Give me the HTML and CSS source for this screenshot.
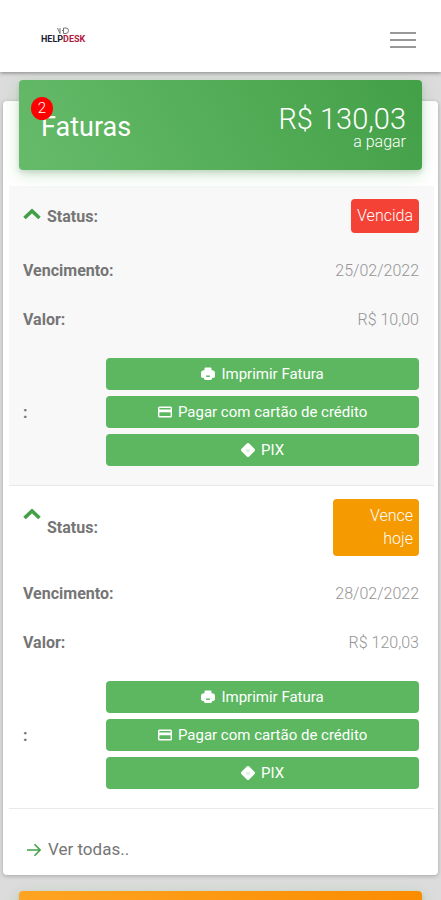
FILE: index.html
```html
<!DOCTYPE html>
<html lang="pt-BR">
<head>
<meta charset="utf-8">
<meta name="viewport" content="width=device-width, initial-scale=1">
<title>Faturas</title>
<link rel="stylesheet" href="styles.css">
</head>
<body>
<svg class="defs" aria-hidden="true">
  <symbol id="chevron" viewBox="0 0 18 12"><path d="M1.500 10 9 3l7.500 7" fill="none" stroke="currentColor" stroke-width="3.600"/></symbol>
  <symbol id="printer" viewBox="0 0 14 14"><path d="M3.500 1.500A1 1 0 0 1 4.500.5h5a1 1 0 0 1 1 1v1.700a3.300 3.300 0 0 1 3.500 3.300V9a2 2 0 0 1-2 2h-.8a2 2 0 0 1-2 2H4.800a2 2 0 0 1-2-2H2a2 2 0 0 1-2-2V6.500a3.300 3.300 0 0 1 3.500-3.300z" fill="currentColor"/><path d="M5 9.200h4" stroke="#5db761" stroke-width="1.400"/></symbol>
  <symbol id="card" viewBox="0 0 14 14"><path d="M1.500 1.500h11A1.500 1.500 0 0 1 14 3v8a1.500 1.500 0 0 1-1.500 1.500h-11A1.500 1.500 0 0 1 0 11V3a1.500 1.500 0 0 1 1.500-1.500zM1.400 3.100v1.300h11.200V3.100zM1.400 7.200V11h11.200V7.200z" fill="currentColor" fill-rule="evenodd"/></symbol>
  <symbol id="pix" viewBox="0 0 14 14"><path d="M5.800.6a1.700 1.700 0 0 1 2.400 0l5.200 5.200a1.700 1.700 0 0 1 0 2.400l-5.200 5.200a1.700 1.700 0 0 1-2.400 0L.6 8.200a1.700 1.700 0 0 1 0-2.400z" fill="currentColor"/><path d="M5 5.800l2 1.700 2-1.700M5 9l2-1.500L9 9" fill="none" stroke="#5db761" stroke-opacity=".4" stroke-width=".7"/></symbol>
</svg>
<header class="topbar">
  <a class="logo" href="#" aria-label="HELPDESK">
    <svg class="logo-mark" viewBox="0 0 12 8" aria-hidden="true"><path d="M.5 1 3 6.500V1M5 3.500h1.500M6.500 1H9q2.500 0 2.500 2.700T9 6.500H6.500z" fill="none" stroke="#666" stroke-width=".9"/></svg>
    <span class="logo-name">HELP<span class="logo-accent">DESK</span></span>
  </a>
  <button class="menu" type="button" aria-label="Menu"><span></span><span></span><span></span></button>
</header>
<main class="content">
  <section class="panel">
    <header class="panel-head">
      <h1 class="title">Faturas<span class="count">2</span></h1>
      <p class="total">R$ 130,03<small>a pagar</small></p>
    </header>
    <table class="invoices">
      <tbody class="invoice">
        <tr><th scope="row"><svg class="chevron"><use href="#chevron"/></svg><span>Status:</span></th><td><span class="badge late">Vencida</span></td></tr>
        <tr><th scope="row">Vencimento:</th><td>25/02/2022</td></tr>
        <tr><th scope="row">Valor:</th><td>R$ 10,00</td></tr>
        <tr class="actions"><th scope="row">:</th><td>
          <button type="button"><svg><use href="#printer"/></svg>Imprimir Fatura</button>
          <button type="button"><svg><use href="#card"/></svg>Pagar com cartão de crédito</button>
          <button type="button"><svg><use href="#pix"/></svg>PIX</button>
        </td></tr>
      </tbody>
      <tbody class="invoice">
        <tr><th scope="row"><svg class="chevron"><use href="#chevron"/></svg><span>Status:</span></th><td><span class="badge today">Vence<br>hoje</span></td></tr>
        <tr><th scope="row">Vencimento:</th><td>28/02/2022</td></tr>
        <tr><th scope="row">Valor:</th><td>R$ 120,03</td></tr>
        <tr class="actions"><th scope="row">:</th><td>
          <button type="button"><svg><use href="#printer"/></svg>Imprimir Fatura</button>
          <button type="button"><svg><use href="#card"/></svg>Pagar com cartão de crédito</button>
          <button type="button"><svg><use href="#pix"/></svg>PIX</button>
        </td></tr>
      </tbody>
    </table>
    <a class="more" href="#"><svg viewBox="0 0 14 14" aria-hidden="true"><path d="M0 7h13M7.500 1.200 13.200 7l-5.700 5.800" fill="none" stroke="currentColor" stroke-width="1.600"/></svg>Ver todas..</a>
  </section>
  <section class="panel">
    <div class="panel-head orange"></div>
  </section>
</main>
</body>
</html>
```
FILE: styles.css
```css
* { box-sizing: border-box; }

body {
  margin: 0;
  height: 100vh;
  display: flex;
  flex-direction: column;
  overflow: hidden;
  background: #dcdcdc;
  color: #757575;
  font-family: Roboto, "Liberation Sans", sans-serif;
  font-size: 16px;
  font-weight: 300;
  line-height: 23px;
}

button { font: inherit; border: 0; }
a { color: inherit; text-decoration: none; }
.defs { position: absolute; width: 0; height: 0; }

.topbar {
  flex: none;
  display: flex;
  justify-content: space-between;
  align-items: center;
  height: 72px;
  padding: 8px 25px 0 41px;
  background: #fff;
  box-shadow: 0 1px 4px rgba(0, 0, 0, .4);
  z-index: 1;
}

.logo {
  display: flex;
  flex-direction: column;
  align-items: center;
  padding-bottom: 10px;
}

.logo-mark { width: 12px; height: 8px; }

.logo-name {
  color: #223;
  font-size: 9px;
  font-weight: 700;
  line-height: 8px;
}

.logo-accent { color: #b3193c; }

.menu {
  display: grid;
  gap: 5px;
  padding: 0;
  background: none;
}

.menu span {
  width: 26px;
  height: 2px;
  background: #999;
}

.content {
  flex: 1;
  min-height: 0;
  overflow: hidden;
  padding: 29px 3px 0;
}

.panel {
  padding: 0 4px 10px 6px;
  margin-bottom: 37px;
  background: #fff;
  border-radius: 4px;
  box-shadow: 0 1px 4px rgba(0, 0, 0, .25);
}

.panel-head {
  position: relative;
  top: -21px;
  display: flex;
  justify-content: space-between;
  height: 90px;
  margin: 0 12px -5px 10px;
  padding: 24px 16px 0 22px;
  color: #fff;
  background: linear-gradient(60deg, #66bb6a, #43a047);
  border-radius: 4px;
  box-shadow: 0 5px 16px rgba(76, 175, 80, .25), 0 3px 5px rgba(0, 0, 0, .12);
}

.orange { background: linear-gradient(60deg, #ffa726, #fb8c00); }

.title {
  position: relative;
  margin: 0;
  font-size: 27px;
  font-weight: 400;
  line-height: 46px;
}

.count {
  position: absolute;
  top: -7px;
  left: -10px;
  width: 22px;
  height: 23px;
  border-radius: 50%;
  background: #f00;
  font-size: 15px;
  font-weight: 300;
  line-height: 23px;
  text-align: center;
}

.total {
  margin: 0;
  font-size: 29px;
  line-height: 30px;
  text-align: right;
}

.total small {
  display: block;
  font-size: 16px;
  line-height: 16px;
}

.invoices {
  display: block;
  width: 100%;
  border-collapse: collapse;
}

.invoice {
  display: block;
  border-bottom: 1px solid #e9e9e9;
}

.invoice:nth-child(odd) { background: #f8f8f8; }

.invoice tr {
  display: flex;
  justify-content: space-between;
  align-items: center;
  padding: 13px 15px 13px 14px;
}

.invoice th {
  display: flex;
  align-self: stretch;
  align-items: center;
  gap: 6px;
  padding: 0;
  font-weight: 700;
  text-align: left;
}

.invoice td {
  padding: 0;
  color: #959595;
  text-align: right;
}

.chevron {
  align-self: flex-start;
  width: 18px;
  height: 12px;
  margin-top: 9px;
  color: #43a047;
}

.badge {
  display: block;
  padding: 5px 6px 6px;
  border-radius: 4px;
  color: #fff;
}

.late { background: #f44336; }
.today { min-width: 86px; background: #f59a00; }

.invoice .actions { padding-top: 14px; padding-bottom: 19px; }

.actions td {
  display: grid;
  gap: 6px;
  width: 79%;
}

.actions button {
  display: flex;
  justify-content: center;
  align-items: center;
  gap: 6px;
  height: 32px;
  padding: 0;
  border-radius: 4px;
  background: #5db761;
  color: #fff;
  font-size: 15px;
  font-weight: 400;
}

.actions svg { width: 14px; height: 14px; }

.more {
  display: flex;
  align-items: center;
  gap: 7px;
  padding: 29px 18px 4px;
  font-size: 17px;
  font-weight: 400;
}

.more svg { width: 14px; height: 14px; color: #43a047; }
```
